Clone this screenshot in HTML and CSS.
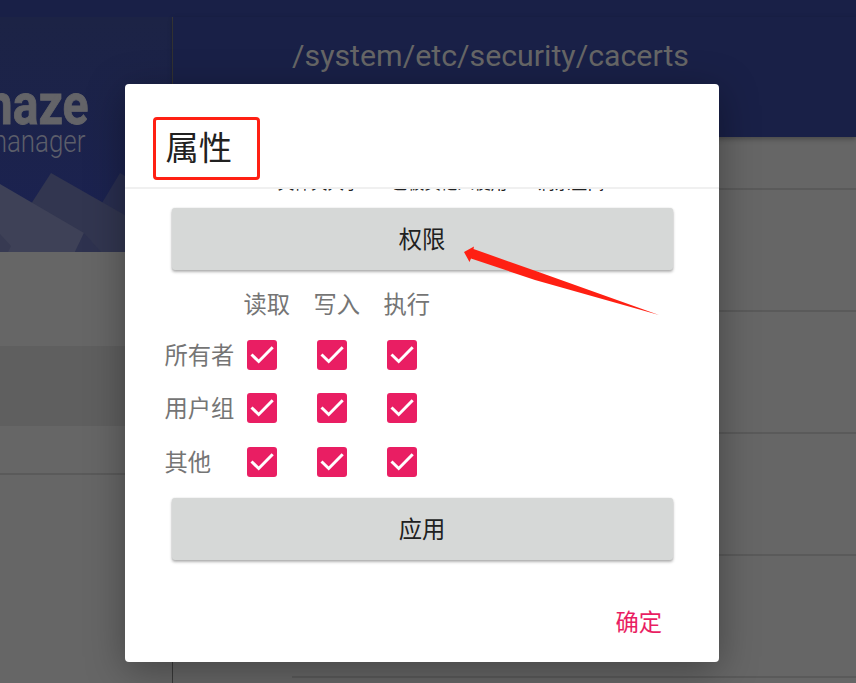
FILE: index.html
```html
<!DOCTYPE html>
<html lang="zh-CN">
<head>
<meta charset="utf-8">
<title>属性</title>
<link rel="stylesheet" href="styles.css">
</head>
<body>
<svg class="symbols" width="0" height="0">
  <symbol id="check" viewBox="0 0 30 30"><rect width="30" height="30" rx="3" fill="#e91e63"/><path d="M4.500 14.500l7.200 7L25.700 7.300" fill="none" stroke="#fff" stroke-width="3"/></symbol>
</svg>
<div class="app">
  <div class="status"></div>
  <div class="columns">
    <aside class="drawer">
      <svg class="banner" width="172" height="235" viewBox="0 17 172 235">
        <defs><linearGradient id="sky" x1="0" y1="0" x2="0" y2="1"><stop offset="0" stop-color="#1c2345"/><stop offset="1" stop-color="#1b2252"/></linearGradient></defs>
        <rect y="17" width="172" height="235" fill="url(#sky)"/>
        <path d="M120 173L172 203V252H80L102 203Z" fill="#292e4f"/>
        <path d="M51 173L172 242V252H0Z" fill="#323650"/>
        <path d="M0 184L84 233L75 252H0Z" fill="#3e4157"/>
        <path d="M84 233L75 252H101Z" fill="#2e324f"/>
        <path d="M0 234L11 246L8 252H0Z" fill="#373a52"/>
        <text class="brand" transform="translate(88.500 124) scale(.83 1)" text-anchor="end">maze</text>
        <text class="sub" transform="translate(85.500 152) scale(.81 1)" text-anchor="end">manager</text>
      </svg>
      <div class="gap"></div>
      <div class="selected"></div>
      <div class="rest"></div>
    </aside>
    <main class="files">
      <header>/system/etc/security/cacerts</header>
      <div class="list"><i class="short"></i><i></i><i></i><i></i><i></i></div>
    </main>
  </div>
</div>
<section class="dialog">
  <div class="title"><h1>属性</h1></div>
  <div class="scroll">
    <div class="legend"><span>文件夹大小</span><span>已被其他人使用</span><span>剩余空间</span></div>
    <button>权限</button>
    <div class="perms">
      <span></span><span class="col">读取</span><span class="col">写入</span><span class="col">执行</span>
      <span>所有者</span><svg><use href="#check"/></svg><svg><use href="#check"/></svg><svg><use href="#check"/></svg>
      <span>用户组</span><svg><use href="#check"/></svg><svg><use href="#check"/></svg><svg><use href="#check"/></svg>
      <span>其他</span><svg><use href="#check"/></svg><svg><use href="#check"/></svg><svg><use href="#check"/></svg>
    </div>
    <button>应用</button>
  </div>
  <div class="actions">确定</div>
  <svg class="arrow" width="200" height="80" viewBox="460 240 200 80"><path d="M464 252L474 246.500L473.500 249L540 272.500L659 315L535 280L471 258.500L469.500 262Z" fill="#ff2013"/></svg>
</section>
</body>
</html>
```

FILE: styles.css
```css
* { box-sizing: border-box; }
body { margin: 0; overflow: hidden; font-family: Roboto, "Noto Sans CJK SC", sans-serif; }
.symbols { position: absolute; }
.app { height: 683px; display: flex; flex-direction: column; background: #666; }
.status { height: 17px; background: #192047; }
.columns { flex: 1; display: flex; }
.drawer { width: 173px; display: flex; flex-direction: column; border-right: 1px solid #393939; }
.banner { display: block; }
.brand { font: 700 58px Roboto, sans-serif; fill: #646468; stroke: #646468; stroke-width: .9px; }
.sub { font: 300 32px Roboto, sans-serif; fill: #5c5e6a; }
.gap { height: 94px; }
.selected { height: 80px; background: #5f5f5f; }
.rest { height: 49px; border-bottom: 2px solid #5a5a5a; }
.files { flex: 1; }
header { height: 120px; padding: 20.500px 0 0 119px; background: #192047; color: #666; font-size: 30.300px; line-height: 36px; box-shadow: 0 2px 5px rgba(0,0,0,.3); }
.list { padding-left: 119px; }
.list i { display: block; height: 122px; border-bottom: 2px solid #5a5a5a; }
.list .short { height: 53px; }
.dialog { position: absolute; left: 125px; top: 84px; width: 594px; height: 578px; display: flex; flex-direction: column; background: #fff; border-radius: 4px; box-shadow: 0 8px 38px rgba(0,0,0,.34); color: #212121; }
.title { height: 105px; padding: 32.500px 27.500px 0; border-bottom: 2px solid #f0f0f0; }
h1 { margin: 0; width: 107px; height: 63px; padding-left: 10px; border: 3px solid #ff2013; border-radius: 4px; font-size: 33.300px; font-weight: 400; line-height: 58px; }
.scroll { height: 390px; padding: 0 46.500px; overflow: hidden; }
.legend { display: flex; justify-content: center; gap: 30.500px; height: 19px; padding-left: 38px; line-height: 24px; font-size: 16.600px; white-space: nowrap; }
.legend span { margin-top: -17px; height: 24px; }
button { display: block; width: 501px; height: 62px; padding: 0 0 2px; border: 0; border-radius: 3px; background: #d6d8d7; color: #212121; font: 400 23.300px/60px "Noto Sans CJK SC", sans-serif; box-shadow: 0 2px 3px rgba(0,0,0,.3), 0 0 2px rgba(0,0,0,.12); }
.perms { display: grid; grid-template-columns: 82px 70px 70px 70px; grid-template-rows: 58px 53.500px 53.500px 53.500px; height: 228px; margin-left: -7px; align-items: center; font-size: 23.300px; color: #757575; line-height: 32px; }
.perms span { padding-top: 2px; }
.perms .col { margin: 9px 0 0 -3px; }
.perms svg { width: 30px; height: 30px; }
.actions { margin-top: 23px; padding-right: 57px; text-align: right; color: #e91e63; font-size: 23.300px; line-height: 42px; }
.arrow { position: absolute; left: 335px; top: 156px; }
```
